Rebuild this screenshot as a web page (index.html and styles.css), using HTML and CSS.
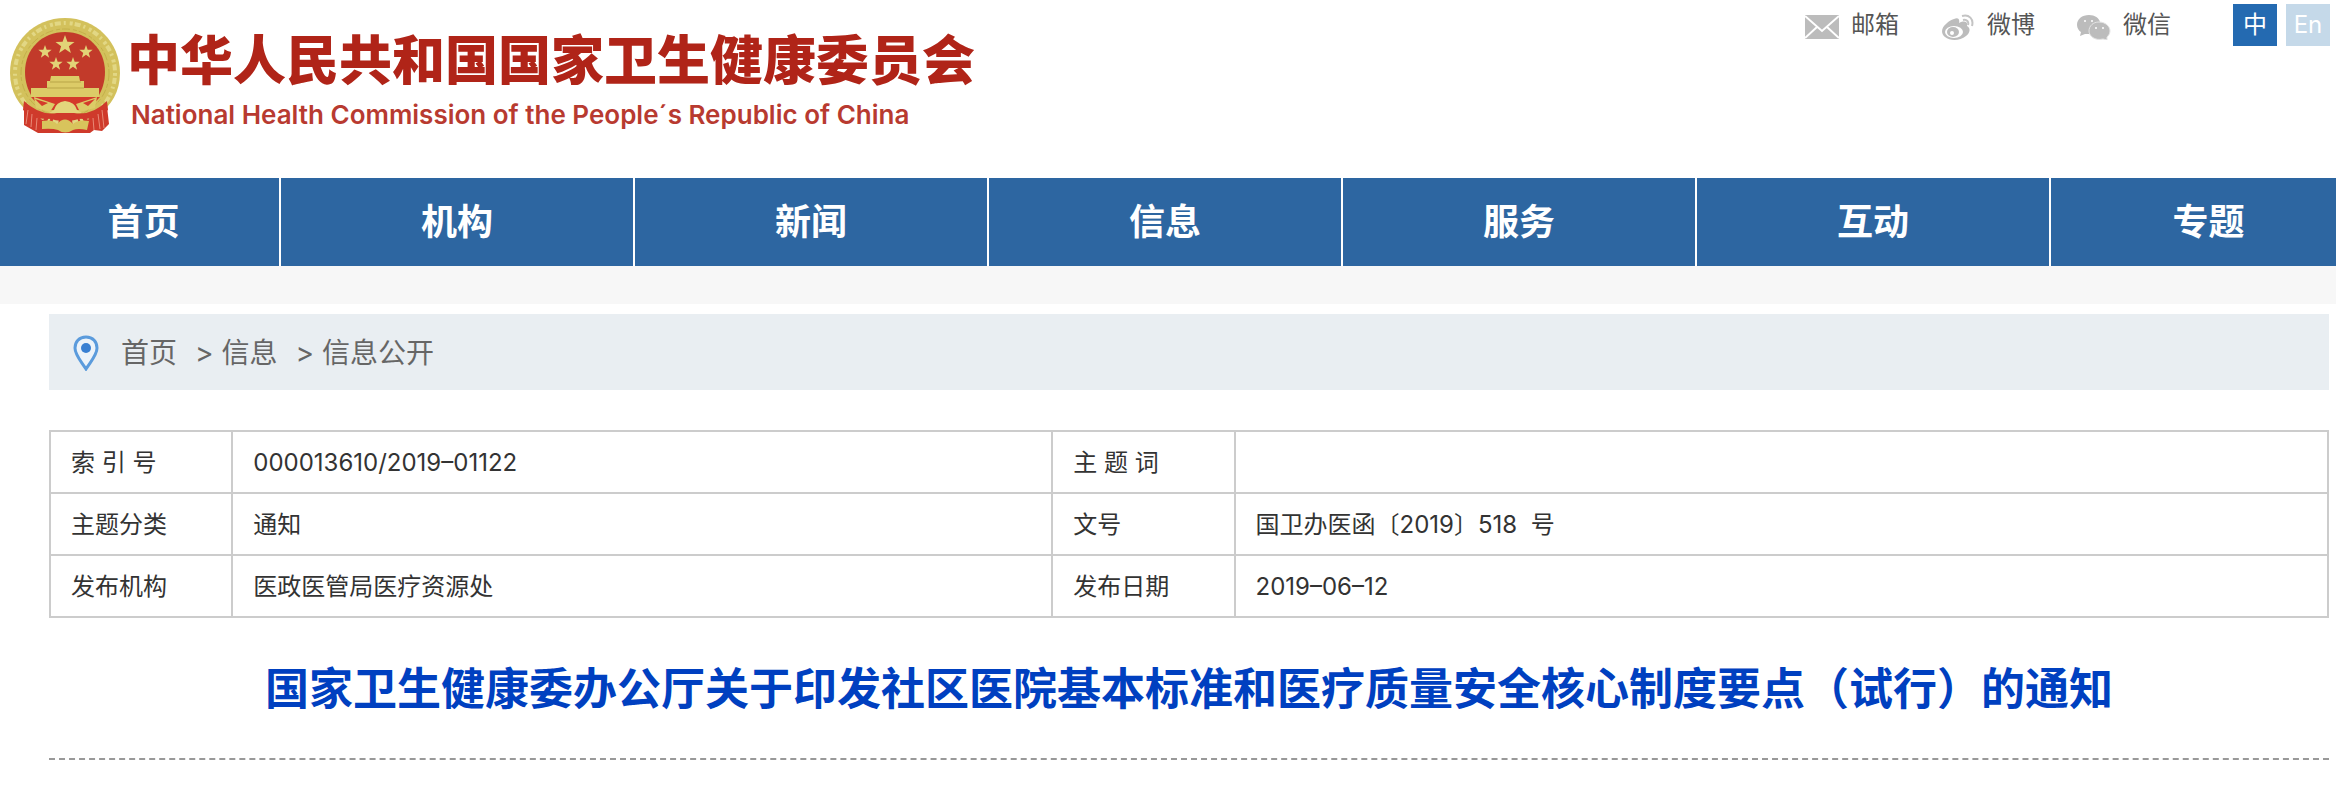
FILE: index.html
```html
<!DOCTYPE html>
<html lang="zh-CN">
<head>
    <meta charset="utf-8">
    <title>国家卫生健康委员会</title>
    <link rel="stylesheet" href="styles.css">
</head>
<body>
    <header class="header">
        <a href="#" class="logo">
            <svg class="logo-emblem" viewBox="0 0 110 116" aria-hidden="true">
                <defs>
                    <polygon id="star" points="0,-10 2.4,-3.3 9.5,-3.1 3.9,1.3 5.9,8.1 0,4.1 -5.9,8.1 -3.9,1.3 -9.5,-3.1 -2.4,-3.3"/>
                </defs>
                <path d="M14 80 L96 80 L99 106 L92 113 L84 112 L80 115 L28 115 L14 107 Z" fill="#cf3a2b"/>
                <path d="M55 0 C86 0 110 24 110 55 C110 74 101 88 88 97 L22 97 C9 88 0 74 0 55 C0 24 24 0 55 0 Z" fill="#d3c15c"/>
                <circle cx="55" cy="55" r="50" fill="none" stroke="#e2d784" stroke-width="4" stroke-dasharray="3 2 6 3 2 4"/>
                <circle cx="55" cy="55" r="44" fill="none" stroke="#c4b04a" stroke-width="1" stroke-dasharray="8 3 4 2"/>
                <path d="M55 14 C78 14 95 31 95 54 C95 64 92 72 88 79 L22 79 C18 72 15 64 15 54 C15 31 32 14 55 14 Z" fill="#c23a2a"/>
                <g fill="#e2d377">
                    <use href="#star" transform="translate(55 27)"/>
                    <use href="#star" transform="translate(35 34) scale(.7)"/>
                    <use href="#star" transform="translate(76 34) scale(.7)"/>
                    <use href="#star" transform="translate(46 46) scale(.7)"/>
                    <use href="#star" transform="translate(63 46) scale(.7)"/>
                </g>
                <path d="M41 58 H69 L70 63 H74 V70 H89 V79 H21 V70 H37 V63 H40 Z" fill="#dccb67"/>
                <path d="M40 64 H71 M37 70 H74" stroke="#b9a548" stroke-width="1"/>
                <path d="M21 79 H90 L78 92 H33 Z" fill="#d43a2b"/>
                <path d="M24 79 L45 86 L40 94 L26 90 Z M87 79 L66 86 L70 94 L85 90 Z" fill="#dccb67"/>
                <path d="M25 81 L38 85 L32 88 Z M85 81 L73 85 L78 88 Z" fill="#d43a2b"/>
                <path d="M44 92 Q46 84 55 83 Q65 84 67 92 L72 95 L39 95 Z" fill="#e3d67c"/>
                <path d="M14 83 Q30 98 47 95 L64 95 Q82 98 97 83 L98 92 Q82 104 66 100 L45 100 Q28 104 13 92 Z" fill="#cf3a2b"/>
                <path d="M32 103 Q43 101 47 106 Q55 97 63 106 Q68 101 79 103 L77 112 Q68 110 63 112 Q55 117 48 112 Q42 110 32 111 Z" fill="#d8c45c"/>
                <path d="M18 92 L16 106 M22 96 L21 109 M27 100 L26 112 M92 92 L94 110 M88 96 L90 111 M83 100 L84 112" stroke="#e88a77" stroke-width="1"/>
            </svg>
            <span class="logo-text">
                <span class="logo-title">中华人民共和国国家卫生健康委员会</span>
                <span class="logo-subtitle">National Health Commission of the People´s Republic of China</span>
            </span>
        </a>
        <div class="tools">
            <a href="#" class="tool">
                <svg class="tool-icon" viewBox="0 0 34 26" aria-hidden="true">
                    <rect x="0" y="1" width="34" height="24" fill="#bcbcbc"/>
                    <path d="M0 2 L17 17 L34 2 M0 24 L12 13 M34 24 L22 13" fill="none" stroke="#fff" stroke-width="2"/>
                </svg>
                邮箱
            </a>
            <a href="#" class="tool">
                <svg class="tool-icon" viewBox="0 0 34 26" aria-hidden="true">
                    <path d="M13 5 C17 3 19 5 18 9 C24 6 27 8 26 12 C30 14 29 19 25 22 C19 27 9 27 4 23 C-1 19 1 13 5 10 C8 7 10 6 13 5 Z" fill="#bcbcbc"/>
                    <ellipse cx="13" cy="18" rx="9" ry="6" fill="#fff"/>
                    <ellipse cx="12" cy="18" rx="6" ry="5" fill="#bcbcbc"/>
                    <circle cx="11" cy="19" r="2" fill="#fff"/>
                    <path d="M21 2 C28 0 33 5 31 12 M22 6 C26 5 28 8 27 11" fill="none" stroke="#c4c4c4" stroke-width="2"/>
                </svg>
                微博
            </a>
            <a href="#" class="tool">
                <svg class="tool-icon" viewBox="0 0 34 26" aria-hidden="true">
                    <path d="M12 1 C5 1 0 5 0 11 C0 14 2 17 4 18 L3 22 L8 20 L12 20 Z M12 1 C18 1 22 4 23 8 L12 20 Z" fill="#bcbcbc"/>
                    <path d="M22 8 C28 8 33 12 33 17 C33 20 31 22 30 23 L30 26 L26 25 C18 27 12 22 12 17 C12 12 16 8 22 8 Z" fill="#bcbcbc" stroke="#e4e4e4" stroke-width="1"/>
                    <g fill="#fff">
                        <circle cx="8" cy="7" r="1"/>
                        <circle cx="15" cy="7" r="1"/>
                        <circle cx="19" cy="14" r="1"/>
                        <circle cx="26" cy="14" r="1"/>
                    </g>
                </svg>
                微信
            </a>
            <div class="lang">
                <a href="#" class="lang-link active">中</a>
                <a href="#" class="lang-link">En</a>
            </div>
        </div>
    </header>

    <nav class="nav">
        <a href="#">首页</a>
        <a href="#">机构</a>
        <a href="#">新闻</a>
        <a href="#">信息</a>
        <a href="#">服务</a>
        <a href="#">互动</a>
        <a href="#">专题</a>
    </nav>
    <div class="band"></div>

    <main class="content">
        <div class="breadcrumb">
            <svg class="pin" viewBox="0 0 26 36" aria-hidden="true">
                <path d="M13 2 C6 2 2 7 2 13 C2 20 8 26 13 34 C18 26 24 20 24 13 C24 7 20 2 13 2 Z" fill="#edf3f9" stroke="#5b9bdc" stroke-width="3"/>
                <circle cx="13" cy="13" r="5" fill="#3a80d2"/>
            </svg>
            <a href="#">首页</a>
            <span class="sep">&gt;</span>
            <a href="#">信息</a>
            <span class="sep">&gt;</span>
            <a href="#">信息公开</a>
        </div>

        <table class="info">
            <tr>
                <th scope="row">索 引 号</th>
                <td>000013610/2019–01122</td>
                <th scope="row">主 题 词</th>
                <td></td>
            </tr>
            <tr>
                <th scope="row">主题分类</th>
                <td>通知</td>
                <th scope="row">文号</th>
                <td>国卫办医函〔2019〕518&nbsp; 号</td>
            </tr>
            <tr>
                <th scope="row">发布机构</th>
                <td>医政医管局医疗资源处</td>
                <th scope="row">发布日期</th>
                <td>2019–06–12</td>
            </tr>
        </table>

        <h1 class="title">国家卫生健康委办公厅关于印发社区医院基本标准和医疗质量安全核心制度要点（试行）的通知</h1>
    </main>
</body>
</html>
```
FILE: styles.css
```css
* {
    box-sizing: border-box;
}

body {
    margin: 0;
    background: #fff;
    color: #333;
    font-family: Inter, "Noto Sans CJK SC", sans-serif;
    font-size: 24px;
    line-height: 36px;
}

a {
    color: inherit;
    text-decoration: none;
}

.header {
    display: flex;
    justify-content: space-between;
    align-items: flex-start;
    padding: 4px 6px 44px 10px;
}

.logo {
    display: flex;
    align-items: flex-start;
    gap: 7px;
    padding-top: 14px;
    color: #b02418;
}

.logo-emblem {
    width: 110px;
    height: 116px;
}

.logo-text {
    display: flex;
    flex-direction: column;
    gap: 8px;
    padding-top: 8px;
}

.logo-title {
    font-family: "Noto Sans CJK SC", sans-serif;
    font-size: 53px;
    font-weight: 900;
    line-height: 62px;
}

.logo-subtitle {
    padding-left: 4px;
    font-size: 26px;
    font-weight: 600;
    line-height: 38px;
    color: #b83a30;
}

.tools {
    display: flex;
    align-items: center;
    color: #555;
}

.tool {
    display: flex;
    align-items: center;
    gap: 12px;
    margin-right: 42px;
}

.tool-icon {
    width: 34px;
    height: 26px;
    margin-top: 4px;
}

.lang {
    display: flex;
    gap: 9px;
    margin-left: 20px;
}

.lang-link {
    width: 44px;
    line-height: 42px;
    background: #c5d9e9;
    color: #fff;
    text-align: center;
}

.lang-link.active {
    background: #246ab1;
}

.nav {
    display: grid;
    grid-template-columns: 281fr repeat(5, 354fr) 285fr;
    background: #2d66a1;
}

.nav a {
    border-right: 2px solid #fff;
    color: #fff;
    font-size: 36px;
    font-weight: bold;
    line-height: 88px;
    text-align: center;
}

.nav a:first-child {
    padding-left: 8px;
}

.nav a:last-child {
    padding-left: 30px;
    border-right: none;
}

.band {
    height: 38px;
    background: #f7f7f7;
}

.content {
    margin: 10px 7px 0 49px;
}

.breadcrumb {
    display: flex;
    align-items: center;
    padding: 19px 24px 17px;
    background: #e9eef2;
    color: #666;
    font-size: 28px;
    line-height: 40px;
}

.pin {
    width: 26px;
    height: 36px;
    margin-right: 22px;
}

.sep {
    margin: 0 8px 0 18px;
}

.info {
    width: 100%;
    margin-top: 40px;
    border-collapse: collapse;
    table-layout: fixed;
}

.info th,
.info td {
    height: 62px;
    padding: 2px 20px 0;
    border: 2px solid #ccc;
    font-weight: normal;
    text-align: left;
}

.info th {
    width: 8%;
}

.info td {
    width: 48%;
}

.info th + td:nth-child(2) {
    width: 36%;
}

.title {
    margin: 0;
    padding: 37px 0 35px;
    border-bottom: 2px dashed #999;
    color: #0040c0;
    font-size: 44px;
    font-weight: bold;
    line-height: 68px;
    text-align: center;
}
```
